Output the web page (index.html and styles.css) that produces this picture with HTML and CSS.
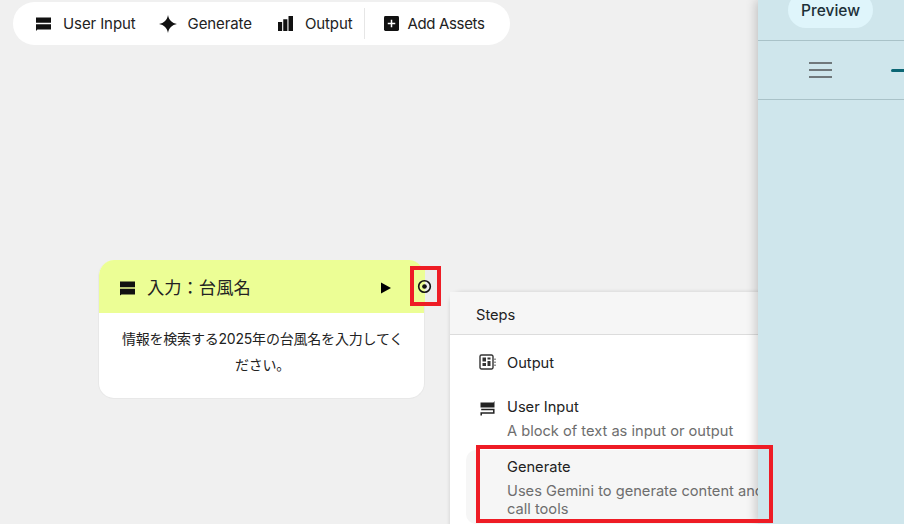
FILE: index.html
```html
<!DOCTYPE html>
<html lang="ja">
<head>
<meta charset="utf-8">
<title>Editor</title>
<link rel="stylesheet" href="styles.css">
</head>
<body>
<div class="app">
  <main class="canvas">
    <nav class="toolbar">
      <div class="tool tool-input">
        <svg class="ticon" viewBox="0 0 16 16"><path d="M0 1.500h16v5.700H0zM0 8.800h16v5.700H1.500L0 16z" fill="#111"/></svg>
        <span>User Input</span>
      </div>
      <div class="tool tool-gen">
        <svg class="ticon-gen" viewBox="0 0 18 18"><path d="M9 0C9.800 5 13 8.200 18 9 13 9.800 9.800 13 9 18 8.200 13 5 9.800 0 9 5 8.200 8.200 5 9 0z" fill="#111"/></svg>
        <span>Generate</span>
      </div>
      <div class="tool tool-out">
        <svg class="ticon" viewBox="0 0 16 16"><path d="M0 6.500h4.400V16H0zM5.600 3.500H10V16H5.600zM11.200 0H16v16h-4.800z" fill="#111"/></svg>
        <span>Output</span>
      </div>
      <div class="sep"></div>
      <div class="tool tool-add">
        <svg class="ticon" viewBox="0 0 16 16"><rect width="16" height="16" rx="1.500" fill="#111"/><path d="M7.200 4h1.600v3.200H12v1.600H8.800V12H7.200V8.800H4V7.200h3.200z" fill="#fff"/></svg>
        <span>Add Assets</span>
      </div>
    </nav>

    <section class="node">
      <header class="node-head">
        <svg class="node-icon" viewBox="0 0 16 16"><path d="M0 1h16v6.200H0zM0 8.800h16v6H1.500L0 16z" fill="#111"/></svg>
        <span class="node-title">入力：台風名</span>
        <svg class="node-play" viewBox="0 0 10 12"><path d="M0 .5v11L10 6z" fill="#000"/></svg>
      </header>
      <p class="node-body">情報を検索する2025年の台風名を入力してください。</p>
    </section>

    <div class="port">
      <svg class="port-icon" viewBox="0 0 16 16"><circle cx="8" cy="8" r="6.200" fill="none" stroke="#111" stroke-width="1.700"/><circle cx="8" cy="8" r="2.500" fill="#111"/></svg>
    </div>

    <section class="menu">
      <div class="menu-head">Steps</div>
      <div class="menu-list">
        <div class="item item-output">
          <svg class="item-icon" viewBox="0 0 17 16"><path d="M1 2.500A1.500 1.500 0 0 1 2.500 1h10A1.500 1.500 0 0 1 14 2.500v11a1.500 1.500 0 0 1-1.500 1.500h-10A1.500 1.500 0 0 1 1 13.500z" fill="none" stroke="#333" stroke-width="1.400"/><path d="M3.500 3.500h3.500v4H3.500zM8.500 3.500h3v2h-3zM8.500 7h3v5h-3zM3.500 9H7v3H3.500z" fill="#333"/><path d="M15.500 4.500h1v1.500h-1zM15.500 7.500h1V9h-1zM15.500 10.500h1V12h-1z" fill="#333"/></svg>
          <div class="item-name">Output</div>
        </div>
        <div class="item item-input">
          <svg class="item-icon" viewBox="0 0 16 16"><path d="M1 2.500h13l1-1.500v6.500H1z" fill="#222"/><path d="M1.700 9.500h12.600v3.500H1.700V15.500" fill="none" stroke="#222" stroke-width="1.500"/></svg>
          <div>
            <div class="item-name">User Input</div>
            <div class="item-desc">A block of text as input or output</div>
          </div>
        </div>
        <div class="item item-gen">
          <div class="item-text">
            <div class="item-name">Generate</div>
            <div class="item-desc">Uses Gemini to generate content and call tools</div>
          </div>
        </div>
      </div>
    </section>
  </main>

  <aside class="panel">
    <div class="panel-top"><div class="preview">Preview</div></div>
    <div class="panel-tabs">
      <div class="burger"><i></i><i></i><i></i></div>
      <div class="tab-line"></div>
    </div>
  </aside>

  <div class="mark mark-port"></div>
  <div class="mark mark-gen"></div>
</div>
</body>
</html>
```

FILE: styles.css
```css
* { box-sizing: border-box; }
html, body { margin: 0; height: 100%; overflow: hidden; }
body { font-family: Inter, "Noto Sans CJK JP", sans-serif; color: #1f1f1f; background: #f0f0f0; }

.app { position: relative; display: flex; width: 904px; height: 524px; }
.canvas { position: relative; flex: 0 0 758px; height: 100%; padding: 2px 0 0 13px; overflow: hidden; }

.toolbar { display: flex; align-items: center; width: 497px; height: 43px; padding-left: 23px; background: #fff; border-radius: 22px; font-size: 15px; color: #222; letter-spacing: -0.1px; }
.tool { display: flex; align-items: center; }
.ticon { width: 15px; height: 15px; margin-right: 12px; flex: none; }
.ticon-gen { width: 18px; height: 18px; margin-right: 11px; flex: none; }
.tool-gen { margin-left: 23px; margin-right: 26px; }
.tool-add { letter-spacing: -0.35px; }
.tool-add .ticon { margin-right: 8px; }
.sep { width: 1px; height: 31px; margin: 0 19px 0 12px; background: #e6e6e6; }

.node { position: absolute; left: 98px; top: 260px; width: 327px; height: 139px; background: #fff; border: 1px solid #e8e8e8; border-top: 0; border-radius: 16px; overflow: hidden; }
.node-head { display: flex; align-items: center; height: 53px; padding: 0 33px 0 21px; background: #ecfe95; }
.node-icon { width: 15px; height: 16px; margin-right: 12px; flex: none; position: relative; top: 1px; }
.node-title { flex: 1; font-size: 17.300px; color: #222; }
.node-play { width: 10px; height: 12px; flex: none; position: relative; top: 1px; }
.node-body { margin: 13px 19px 0 21px; font-size: 14px; line-height: 26px; text-align: center; color: #222; letter-spacing: -0.2px; }

.port { position: absolute; left: 414px; top: 270px; width: 23px; height: 32px; display: flex; align-items: center; padding-left: 3px; background: linear-gradient(90deg, #ecfe95 0 11px, #ececec 11px); }
.port-icon { width: 15px; height: 15px; }

.mark { position: absolute; border: 4px solid #ee1c25; z-index: 5; }
.mark-port { left: 410px; top: 266px; width: 31px; height: 40px; }
.mark-gen { left: 476px; top: 445px; width: 297px; height: 78px; }

.menu { position: absolute; left: 450px; top: 292px; width: 340px; height: 260px; background: #fff; border-radius: 12px 0 0 0; box-shadow: 0 0 4px rgba(0,0,0,.14); font-size: 14.650px; }
.menu-head { height: 43px; padding: 14px 0 0 26px; background: #f6f6f6; border-bottom: 1px solid #dcdcdc; color: #222; line-height: 18px; }
.menu-list { padding: 0 0 0 16px; }
.item { display: flex; padding-left: 13px; }
.item-icon { width: 17px; height: 16px; margin-right: 11px; flex: none; }
.item-output { padding-top: 19px; height: 61px; }
.item-input { height: 54px; padding-top: 2px; }
.item-input .item-icon { margin-top: 2px; }
.item-name { line-height: 18px; color: #222; }
.item-desc { margin-top: 6px; line-height: 18px; color: #6e6e6e; width: 262px; }
.item-gen { height: 74px; width: 320px; padding: 8px 0 0 41px; background: #f6f6f6; border-radius: 10px 0 0 10px; }

.panel { position: relative; z-index: 4; flex: 0 0 146px; height: 100%; background: #cfe6ec; box-shadow: -2px 0 10px rgba(0,0,0,.2); overflow: hidden; }
.panel-top { height: 41px; padding-left: 30px; border-bottom: 1px solid #a9c2c8; display: flow-root; }
.preview { width: 85px; height: 36px; display: flex; align-items: center; justify-content: center; margin-top: -8px; background: #dff5fb; border-radius: 18px; font-size: 15.500px; font-weight: 500; color: #1c3038; }
.panel-tabs { display: flex; align-items: center; justify-content: space-between; height: 59px; border-bottom: 1px solid #a9c2c8; padding-left: 51px; }
.burger { display: flex; flex-direction: column; gap: 5px; }
.burger i { display: block; width: 23px; height: 2px; background: #70787b; }
.tab-line { width: 13px; height: 3px; background: #0b6674; border-radius: 2px 0 0 2px; }
```
